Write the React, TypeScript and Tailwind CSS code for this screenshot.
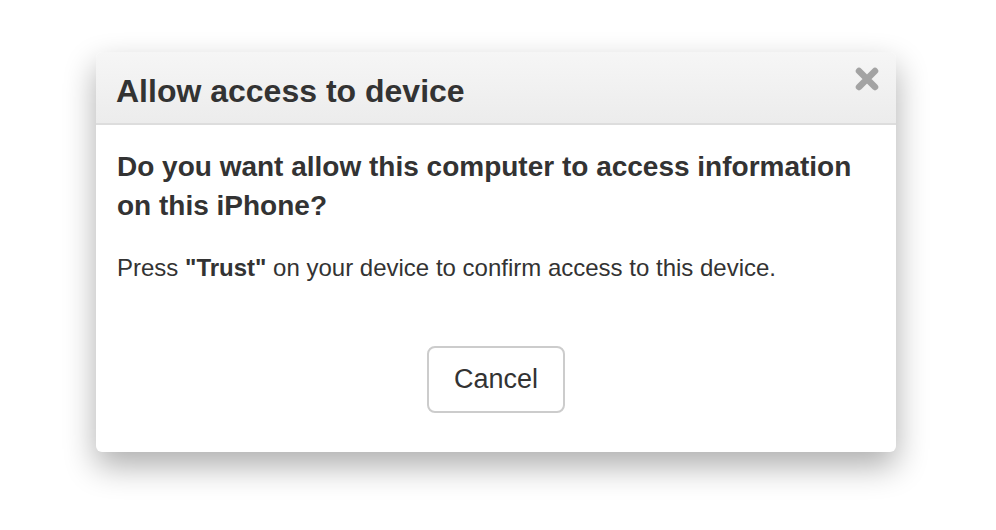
import React from 'react';

function CloseIcon() {
  return (
    <svg width="24" height="24" viewBox="0 0 24 24" aria-hidden="true">
      <path d="M4 4 L20 20 M20 4 L4 20" stroke="#a3a3a3" strokeWidth="6.5" strokeLinecap="round" />
    </svg>
  );
}

export default function App() {
  return (
    <div className="min-h-screen bg-white pt-[52px] pl-[96px] font-['Liberation_Sans',Arial,sans-serif] text-[#333]">
      <div className="relative w-[800px] rounded-[6px] bg-white shadow-[0_14px_32px_rgba(0,0,0,0.32)]">
        <div className="flex h-[73px] items-center rounded-t-[6px] border-b-2 border-[#dddddd] bg-gradient-to-b from-[#f6f6f6] to-[#ececec] px-[20px] pt-[6px]">
          <h1 className="text-[32px] font-bold leading-none">Allow access to device</h1>
        </div>
        <button className="absolute right-[17px] top-[15px] flex items-center justify-center">
          <CloseIcon />
        </button>

        <div className="px-[21px] pt-[22px] pb-[39px]">
          <h2 className="text-[28px] font-bold leading-[39px]">
            Do you want allow this computer to access information on this iPhone?
          </h2>
          <p className="mt-[26px] text-[24px] leading-[34px]">
            Press <strong className="font-bold">"Trust"</strong> on your device to confirm access to this device.
          </p>
          <div className="mt-[61px] flex justify-center">
            <button className="h-[67px] w-[138px] rounded-[8px] border-2 border-[#cccccc] bg-white text-[27px] text-[#333]">
              Cancel
            </button>
          </div>
        </div>
      </div>
    </div>
  );
}
